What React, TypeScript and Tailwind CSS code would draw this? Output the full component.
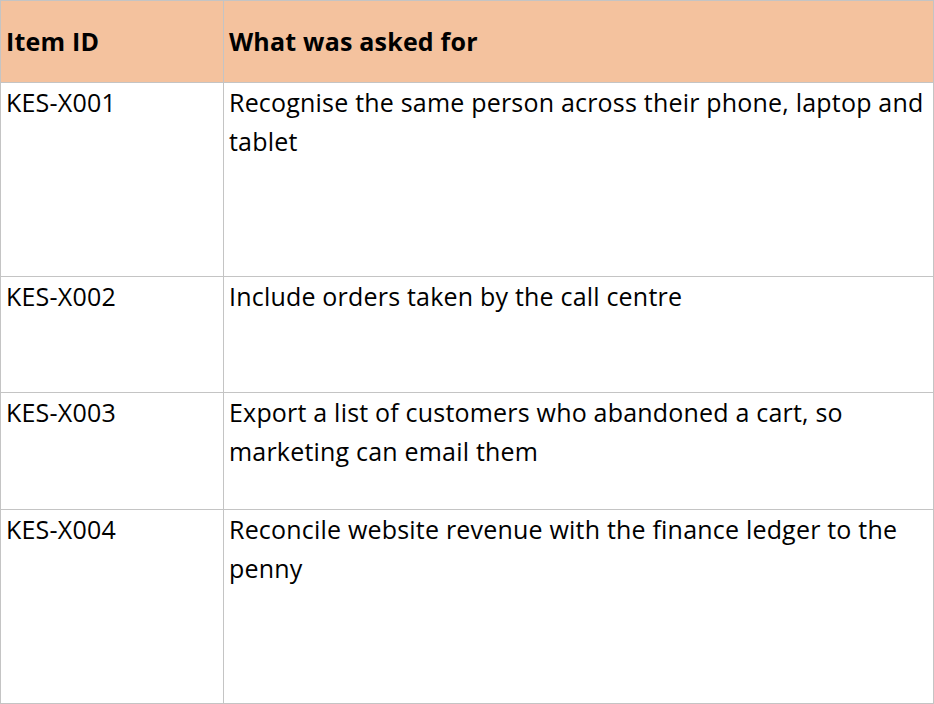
import React from "react";

const rows = [
  { id: "KES-X001", text: "Recognise the same person across their phone, laptop and tablet", h: "h-[194px]" },
  { id: "KES-X002", text: "Include orders taken by the call centre", h: "h-[116px]" },
  { id: "KES-X003", text: "Export a list of customers who abandoned a cart, so marketing can email them", h: "h-[117px]" },
  { id: "KES-X004", text: "Reconcile website revenue with the finance ledger to the penny", h: "h-[194px]" },
];

export default function App() {
  return (
    <div className="w-[934px] h-[704px] bg-white overflow-hidden" style={{ fontFamily: '"Open Sans", "Liberation Sans", sans-serif' }}>
      <table className="w-[934px] border-collapse table-fixed text-[25px] leading-[39px] tracking-[0.2px] text-black">
        <colgroup>
          <col className="w-[223px]" />
          <col />
        </colgroup>
        <thead>
          <tr className="h-[82px] bg-[#f4c29e]">
            <th className="border border-[#c4c4c4] text-left align-middle font-bold px-[5px]">Item ID</th>
            <th className="border border-[#c4c4c4] text-left align-middle font-bold px-[5px]">What was asked for</th>
          </tr>
        </thead>
        <tbody>
          {rows.map((r) => (
            <tr key={r.id} className={r.h}>
              <td className="border border-[#c4c4c4] align-top px-[5px] pt-0">{r.id}</td>
              <td className="border border-[#c4c4c4] align-top px-[5px] pt-0">{r.text}</td>
            </tr>
          ))}
        </tbody>
      </table>
    </div>
  );
}
